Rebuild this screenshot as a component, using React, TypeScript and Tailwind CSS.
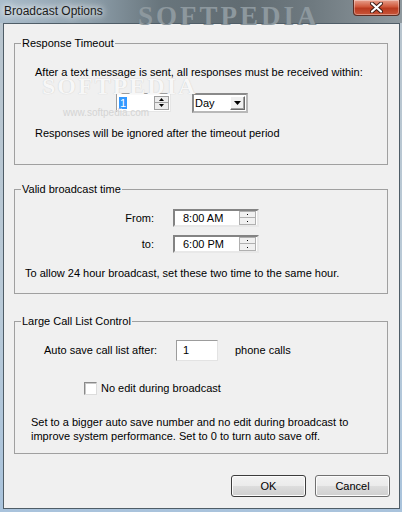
import React from 'react';

function SpinArrows() {
  return (
    <div className="ml-auto mr-[1px] flex h-full w-[15px] flex-col justify-center gap-0">
      <div className="flex h-[7px] items-center justify-center border border-[#a0a0a0] bg-[#ececec]">
        <svg width="5" height="3" viewBox="0 0 5 3"><path d="M2.5 0L5 3H0z" fill="#000" /></svg>
      </div>
      <div className="flex h-[7px] items-center justify-center border border-t-0 border-[#a0a0a0] bg-[#ececec]">
        <svg width="5" height="3" viewBox="0 0 5 3"><path d="M0 0h5L2.5 3z" fill="#000" /></svg>
      </div>
    </div>
  );
}

function TimeBox({ value }: { value: string }) {
  return (
    <div className="ml-[19px] flex h-[18px] w-[86px] items-center border-2 border-t-[#838383] border-l-[#838383] border-r-[#e8e8e8] border-b-[#e8e8e8] bg-white">
      <span className="ml-[8px] leading-[13px]">{value}</span>
      <div className="ml-auto mr-[1px] flex h-[14px] w-[17px] flex-col">
        <div className="flex h-[7px] items-center justify-center border border-[#b0b0b0] bg-[#f0f0f0]">
          <span className="h-[1px] w-[1px] bg-black" />
        </div>
        <div className="flex h-[7px] items-center justify-center border border-t-0 border-[#b0b0b0] bg-[#f0f0f0]">
          <span className="h-[1px] w-[1px] bg-black" />
        </div>
      </div>
    </div>
  );
}

function Group({ title, children, className }: { title: string; children: React.ReactNode; className?: string }) {
  return (
    <fieldset className={'ml-[10px] mr-[11px] border border-[#a0a0a0] ' + (className ?? '')}>
      <legend className="ml-[6px] px-[1px] leading-[14px]">{title}</legend>
      {children}
    </fieldset>
  );
}

export default function App() {
  return (
    <div className="relative flex h-[512px] w-[402px] flex-col overflow-hidden bg-[linear-gradient(180deg,#b8c4cd_0%,#b9cad8_60%,#a9c3dc_100%)] font-['Liberation_Sans',Arial,sans-serif] text-[11px] text-black">
      {/* title bar */}
      <div className="relative h-[23px] shrink-0 bg-[linear-gradient(90deg,#a9bccb_0%,#8e9fab_22%,#68757c_40%,#616c72_60%,#6f7a80_78%,#8f999f_100%)]">
        <span className="absolute left-[138px] top-[-4px] font-['Liberation_Serif',serif] text-[27px] font-bold tracking-[3px] text-[#8d989e]">
          SOFTPEDIA
        </span>
        <span className="absolute left-[4px] top-[3px] text-[12px] leading-[16px] text-[#1b1b1b] [text-shadow:0_0_6px_#ffffff,0_0_10px_#ffffff]">
          Broadcast Options
        </span>
        <div className="absolute right-[2px] top-0 flex h-[16px] w-[47px] items-center justify-center rounded-b-[4px] border border-t-0 border-[#5b2c22] bg-[linear-gradient(180deg,#e7a08d_0%,#d0583b_45%,#b93a1f_55%,#c9563a_100%)] shadow-[inset_0_0_0_1px_rgba(255,255,255,0.35)]">
          <svg width="13" height="11" viewBox="0 0 13 11">
            <path d="M2 1.5L11 9.5M11 1.5L2 9.5" stroke="#3a1a14" strokeWidth="4" strokeLinecap="round" />
            <path d="M2 1.5L11 9.5M11 1.5L2 9.5" stroke="#ffffff" strokeWidth="2.2" strokeLinecap="round" />
          </svg>
        </div>
      </div>

      {/* client area */}
      <div className="mb-[3px] ml-[3px] mr-[2px] flex flex-1 flex-col border border-[#4f5d67] bg-[#f0f0f0]">
        <Group title="Response Timeout" className="mt-[12px] pb-[24px]">
          <p className="mt-[15px] pl-[20px] leading-[14px]">
            After a text message is sent, all responses must be received within:
          </p>
          <div className="mt-[14px] flex h-[20px] items-start gap-[21px] pl-[101px]">
            <div className="flex h-[19px] w-[55px] items-center border border-t-[#9c9c9c] border-l-[#9c9c9c] border-r-[#e6e6e6] border-b-[#e6e6e6] bg-white">
              <span className="ml-[2px] bg-[#3399ff] px-[1px] leading-[12px] text-white">1</span>
              <SpinArrows />
            </div>
            <div className="flex h-[20px] w-[56px] items-center border-2 border-[#8a8a8a] border-r-[#b8b8b8] border-b-[#b8b8b8] bg-white">
              <span className="ml-[1px] leading-[13px]">Day</span>
              <div className="ml-auto mr-[1px] flex h-[14px] w-[15px] items-center justify-center border border-t-white border-l-white border-r-[#696969] border-b-[#696969] bg-[#f0f0f0] shadow-[inset_-1px_-1px_0_#a0a0a0]">
                <svg width="7" height="4" viewBox="0 0 7 4"><path d="M0 0h7L3.5 4z" fill="#000" /></svg>
              </div>
            </div>
          </div>
          <p className="mt-[13px] pl-[20px] leading-[14px]">Responses will be ignored after the timeout period</p>
        </Group>

        <Group title="Valid broadcast time" className="mt-[17px] pb-[13px]">
          <div className="mt-[13px] flex h-[18px] items-center">
            <span className="w-[139px] text-right">From:</span>
            <TimeBox value="8:00 AM" />
          </div>
          <div className="mt-[8px] flex h-[18px] items-center">
            <span className="w-[139px] text-right">to:</span>
            <TimeBox value="6:00 PM" />
          </div>
          <p className="mt-[13px] pl-[10px] leading-[14px]">
            To allow 24 hour broadcast, set these two time to the same hour.
          </p>
        </Group>

        <Group title="Large Call List Control" className="mt-[20px] pb-[10px]">
          <div className="mt-[12px] flex h-[21px] items-center pl-[29px]">
            <span className="w-[132px]">Auto save call list after:</span>
            <div className="flex h-[21px] w-[42px] items-center border border-t-[#9c9c9c] border-l-[#9c9c9c] border-r-[#e3e3e3] border-b-[#e3e3e3] bg-white">
              <span className="ml-[6px] leading-[13px]">1</span>
            </div>
            <span className="ml-[17px]">phone calls</span>
          </div>
          <label className="mt-[20px] flex h-[14px] items-center gap-[4px] pl-[69px]">
            <span className="h-[13px] w-[13px] border border-t-[#8a8a8a] border-l-[#8a8a8a] border-r-[#dcdcdc] border-b-[#dcdcdc] bg-white shadow-[inset_1px_1px_0_#c8c8c8]" />
            <span>No edit during broadcast</span>
          </label>
          <p className="mt-[20px] pl-[16px] leading-[14px]">
            Set to a bigger auto save number and no edit during broadcast to
            <br />
            improve system performance. Set to 0 to turn auto save off.
          </p>
        </Group>

        <div className="mt-[21px] flex justify-end gap-[9px] pr-[9px]">
          <button
            type="button"
            className="h-[22px] w-[75px] rounded-[3px] border border-[#3c3c3c] bg-[linear-gradient(180deg,#f2f2f2_0%,#ebebeb_50%,#dddddd_51%,#cfcfcf_100%)] shadow-[inset_0_0_0_1px_#fcfcfc]"
          >
            OK
          </button>
          <button
            type="button"
            className="h-[22px] w-[75px] rounded-[3px] border border-[#707070] bg-[linear-gradient(180deg,#f2f2f2_0%,#ebebeb_50%,#dddddd_51%,#cfcfcf_100%)] shadow-[inset_0_0_0_1px_#fcfcfc]"
          >
            Cancel
          </button>
        </div>
      </div>

      {/* watermark */}
      <span className="pointer-events-none absolute left-[42px] top-[79px] font-['Liberation_Serif',serif] text-[24px] font-bold leading-[14px] tracking-[2px] text-[#f7f7f7] [text-shadow:0_0_1px_#c4c4c4]">
        SOFTPEDIA
      </span>
      <span className="pointer-events-none absolute left-[63px] top-[109px] text-[10px] leading-[7px] text-[#d4d4d4]">
        www.softpedia.com
      </span>
    </div>
  );
}
